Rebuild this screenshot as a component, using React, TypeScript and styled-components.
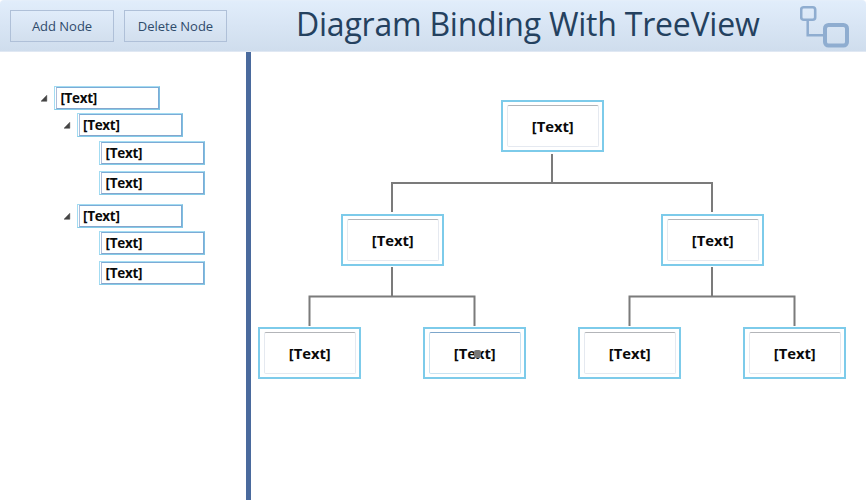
import React from "react";
import styled, { createGlobalStyle } from "styled-components";

const GlobalStyle = createGlobalStyle`
  * { box-sizing: border-box; }
  body { margin: 0; background: #fff; overflow: hidden; }
`;

const Page = styled.div`
  width: 866px;
  height: 500px;
  display: flex;
  flex-direction: column;
  background: #fff;
  font-family: "Open Sans", "Noto Sans", sans-serif;
`;

const Toolbar = styled.header`
  height: 52px;
  flex: none;
  display: flex;
  padding: 10px 17px 0 10px;
  border-radius: 4px 4px 0 0;
  border-top: 1px solid #e4eefa;
  border-bottom: 1px solid #e0e8f3;
  background: linear-gradient(#e1edfb, #cfdded);
`;

const ToolButton = styled.button`
  width: 104px;
  height: 32px;
  margin: -1px 10px 0 0;
  padding: 0;
  border: 1px solid #afc0d8;
  background: linear-gradient(#e0ecfa, #d2dfee);
  color: #2f4b6b;
  font: 400 13px/30px "Open Sans", sans-serif;
  letter-spacing: -0.02px;

  & + & {
    width: 103px;
  }
`;

const Title = styled.h1`
  width: 480px;
  margin: -10px 0 0 59px;
  color: #24415f;
  font-size: 32px;
  font-weight: 400;
  line-height: 46px;
  letter-spacing: -0.23px;
  white-space: nowrap;
`;

const Logo = styled.svg`
  flex: none;
  margin: -11px 0 0 auto;
`;

const Body = styled.main`
  flex: 1;
  display: flex;
`;

const Sidebar = styled.nav`
  width: 246px;
  padding: 34px 0 0 41px;
`;

const Splitter = styled.div`
  width: 5px;
  background: #4a6a9d;
`;

const TreeRow = styled.div<{ $level: number; $gap: number }>`
  display: flex;
  height: 23px;
  margin-top: ${(p) => p.$gap}px;
  padding-left: ${(p) => p.$level * 22.6}px;
`;

const Arrow = styled.svg`
  width: 13px;
  height: 23px;
  flex: none;
`;

const TreeItem = styled.div`
  width: 106px;
  height: 24px;
  padding: 0 0 0 1px;
  border: 1px solid #a3dcf2;
  border-right-color: #7fbfe0;
  border-bottom-color: #84cbe8;
`;

const TreeLabel = styled.div`
  height: 22px;
  padding-left: 3.4px;
  border: 1px solid #7cabd6;
  border-left-color: #aebdd9;
  border-bottom-color: #84a6cd;
  color: #0a0a0a;
  font-size: 13.5px;
  font-weight: 700;
  line-height: 20px;
  letter-spacing: -0.3px;
`;

const Canvas = styled.section`
  position: relative;
  flex: 1;
`;

const Links = styled.svg`
  display: block;
`;

const Node = styled.div<{ $x: number; $y: number }>`
  position: absolute;
  left: ${(p) => p.$x}px;
  top: ${(p) => p.$y}px;
  width: 103px;
  height: 52px;
  padding: 3px;
  border: 2px solid #7dcbea;
`;

const NodeLabel = styled.div<{ $active: boolean }>`
  height: 42px;
  margin: 0 0 0 1px;
  padding-right: 0.5px;
  border: 1px solid ${(p) => (p.$active ? "#c9e3f2" : "#e5e9f0")};
  border-top-color: ${(p) => (p.$active ? "#7da6cb" : "#b3b5b9")};
  border-radius: 2px;
  color: #0a0a0a;
  font-size: 14.8px;
  font-weight: 700;
  line-height: 41px;
  letter-spacing: -0.05px;
  text-align: center;
`;

const Handle = styled.i`
  position: absolute;
  left: 49px;
  top: 21px;
  width: 7px;
  height: 8px;
  border-radius: 2px;
  background: #777;
`;

const rows = [
  { level: 0, gap: 0, open: true },
  { level: 1, gap: 4, open: true },
  { level: 2, gap: 5, open: false },
  { level: 2, gap: 7, open: false },
  { level: 1, gap: 10, open: true },
  { level: 2, gap: 4, open: false },
  { level: 2, gap: 7.4, open: false },
];

const nodes = [
  { x: 250, y: 48 },
  { x: 90, y: 162 },
  { x: 410, y: 162 },
  { x: 7, y: 275 },
  { x: 172, y: 275, active: true },
  { x: 327, y: 275 },
  { x: 492, y: 275 },
];

export default function App() {
  return (
    <Page>
      <GlobalStyle />
      <Toolbar>
        <ToolButton>Add Node</ToolButton>
        <ToolButton>Delete Node</ToolButton>
        <Title>Diagram Binding With TreeView</Title>
        <Logo width="49" height="50" fill="none" stroke="#8fadd0">
          <rect x="1.2" y="7.2" width="14" height="12.6" rx="2.5" strokeWidth="2.6" />
          <path d="M7.7 20V35.3H23" strokeWidth="2.5" />
          <rect x="25" y="25" width="22" height="20.5" rx="3.5" strokeWidth="4" />
        </Logo>
      </Toolbar>
      <Body>
        <Sidebar>
          {rows.map((row, i) => (
            <TreeRow key={i} $level={row.level} $gap={row.gap}>
              <Arrow>
                {row.open && <path d="M5.8 9.3V15.3H0Z" fill="#444" stroke="#444" strokeWidth=".5" />}
              </Arrow>
              <TreeItem>
                <TreeLabel>[Text]</TreeLabel>
              </TreeItem>
            </TreeRow>
          ))}
        </Sidebar>
        <Splitter />
        <Canvas>
          <Links width="615" height="448" fill="none" stroke="#7b7b7b" strokeWidth="2">
            <path d="M301 102V131M141 160V131H461V160" />
            <path d="M141 215V244.5M58.5 274V244.5H223.5V274" />
            <path d="M461 215V244.5M378.5 274V244.5H543.5V274" />
          </Links>
          {nodes.map((node, i) => (
            <Node key={i} $x={node.x} $y={node.y}>
              <NodeLabel $active={!!node.active}>[Text]</NodeLabel>
              {node.active && <Handle />}
            </Node>
          ))}
        </Canvas>
      </Body>
    </Page>
  );
}
